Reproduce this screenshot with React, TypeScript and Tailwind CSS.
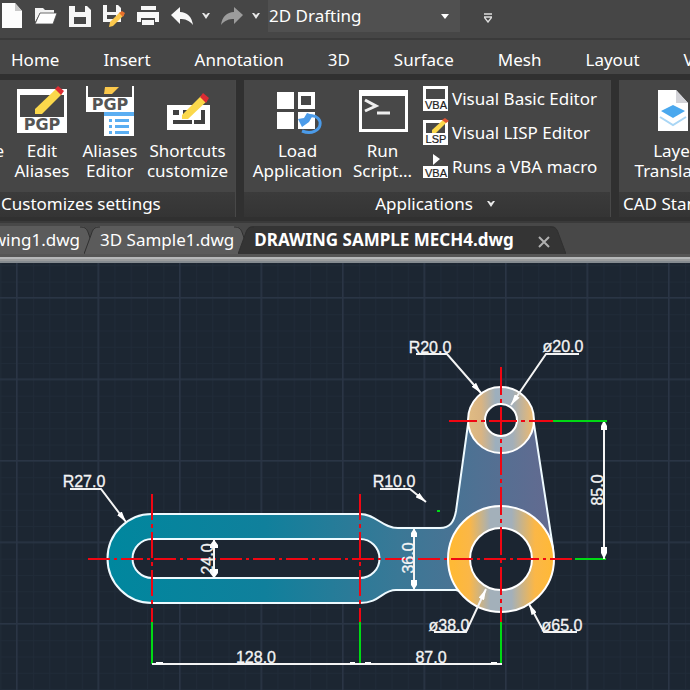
import type { ReactNode } from "react";

function NewIcon() {
  return (
    <svg className="h-7 w-6 shrink-0" viewBox="0 0 24 28" aria-hidden="true">
      <path d="M2 3h13l7 8v18H2z" fill="#fdfdfd" />
      <path d="M15 3l7 8h-7z" fill="#c9c9c9" />
    </svg>
  );
}

function OpenIcon() {
  return (
    <svg className="h-7 w-6 shrink-0" viewBox="0 0 24 28" aria-hidden="true">
      <path d="M1 8h8l2 2h9v3H6L1 22z" fill="#f2f2f2" />
      <path d="M6 13h17l-4 11H1z" fill="#fff" stroke="#4a4a4a" strokeWidth="0.8" />
    </svg>
  );
}

function SaveIcon() {
  return (
    <svg className="h-7 w-6 shrink-0" viewBox="0 0 24 28" aria-hidden="true">
      <path d="M1 6h18l4 4v17H1z" fill="#f7f7f7" />
      <path d="M7 6h10v6H7zM6 17h12v7H6z" fill="#484848" />
    </svg>
  );
}

function SaveAsIcon() {
  return (
    <svg className="h-7 w-6 shrink-0" viewBox="0 0 24 28" aria-hidden="true">
      <path d="M1 5h15l3 3v14H1z" fill="#f7f7f7" />
      <path d="M5 5h9v7H5zM5 15h9v4H5z" fill="#484848" />
      <path d="M8 22L18 12l4 3-11 11-4 1z" fill="#fbc84d" />
      <path d="M17 13l3-2 3 2-2 4z" fill="#e8712d" />
    </svg>
  );
}

function PrintIcon() {
  return (
    <svg className="h-7 w-6 shrink-0" viewBox="0 0 24 28" aria-hidden="true">
      <path d="M5 6h15v4H5zM1 12h22v10h-4v-4H5v4H1z" fill="#f7f7f7" />
      <path d="M6 20h12v5H6z" fill="#f7f7f7" />
    </svg>
  );
}

function ArrowIcon({ redo }: { redo?: boolean }) {
  return (
    <svg className="h-7 w-6 shrink-0" viewBox="0 0 24 28" aria-hidden="true">
      <path
        d={redo ? "M23 15L14 7v5C7 12 2 17 1 25c4-5 8-6 13-6v5z" : "M1 15l9-8v5c7 0 12 5 13 13-4-5-8-6-13-6v5z"}
        fill={redo ? "#9c9c9c" : "#f7f7f7"}
      />
    </svg>
  );
}

function Chevron() {
  return (
    <svg className="h-2 w-2 shrink-0" viewBox="0 0 8 8" aria-hidden="true">
      <path d="M0 1h2l2 2 2-2h2L4 7z" fill="#e8e8e8" />
    </svg>
  );
}

function EditAliasesIcon() {
  return (
    <svg className="h-12 w-13 overflow-visible" viewBox="0 0 52 48" aria-hidden="true">
      <path d="M1 1h50v44H1z" fill="#fff" />
      <path d="M4 7h44v22H4z" fill="#474747" />
      <path d="M19 26v-5L40 1l6 5-20 20z" fill="#fbd84b" />
      <path d="M39 1l3-3 6 5-3 4z" fill="#dc2c33" />
      <text x="26" y="42" textAnchor="middle" className="font-['DejaVu_Sans'] text-[16px] font-bold" fill="#555">PGP</text>
    </svg>
  );
}

function AliasesEditorIcon() {
  return (
    <svg className="h-12 w-13 overflow-visible" viewBox="0 0 52 48" aria-hidden="true">
      <path d="M2-2h2V9h44V-2h2v26H2z" fill="#fff" />
      <path d="M21-1h14l-7 7h-8z" fill="#fbc84b" />
      <text x="26" y="22" textAnchor="middle" className="font-['DejaVu_Sans'] text-[16px] font-bold" fill="#555">PGP</text>
      <path d="M20 24h30v24H20z" fill="#fff" />
      <path d="M20 24h30v4H20zM25 31h3v3h-3zM31 31h14v3H31zM25 37h3v3h-3zM31 37h14v3H31zM25 43h3v3h-3zM31 43h14v3H31z" fill="#5aaef2" />
    </svg>
  );
}

function ShortcutsIcon() {
  return (
    <svg className="h-12 w-13" viewBox="0 0 52 48" aria-hidden="true">
      <path d="M5 17h43v25H5z" fill="#fff" />
      <path d="M11 22h6v5h-6zM21 22h7v5h-7zM39 22h4v14H32v-4h7zM11 32h19v4H11z" fill="#404040" />
      <path d="M20 31v-4L39 8l6 5-19 18z" fill="#fbd84b" />
      <path d="M38 9l3-4 6 5-3 5z" fill="#dc2c33" />
    </svg>
  );
}

function LoadIcon() {
  return (
    <svg className="h-12 w-13" viewBox="0 0 52 48" aria-hidden="true">
      <path d="M5 4h17v17H5zM26 4h17v17H26zM5 24h17v17H5zM26 24h17v17H26z" fill="#fff" />
      <path d="M29 8h10v9H29z" fill="#474747" />
      <path d="M38 28c7-1 11 4 10 9s-8 10-18 6" fill="none" stroke="#4b9be9" strokeWidth="3" />
      <path d="M26 31l4 8 7-5 4-7-6-2-3 5z" fill="#4b9be9" />
    </svg>
  );
}

function ScriptIcon() {
  return (
    <svg className="h-12 w-13" viewBox="0 0 52 48" aria-hidden="true">
      <path d="M2 2h49v42H2z" fill="#fff" />
      <path d="M5 8h43v33H5z" fill="#484848" />
      <path d="M8 12l11 6-11 5M20 25h13" fill="none" stroke="#eee" strokeWidth="3" />
    </svg>
  );
}

function LayerIcon() {
  return (
    <svg className="h-12 w-13" viewBox="0 0 52 48" aria-hidden="true">
      <path d="M9 2h18l12 13v28H9z" fill="#fff" />
      <path d="M27 2l12 13H27z" fill="#d3d3d8" />
      <path d="M24 17l12 6-12 7-12-7z" fill="#4aa8ee" />
      <path d="M11 29l13 8 13-8" fill="none" stroke="#a9d6f5" strokeWidth="2" />
    </svg>
  );
}

function SmallIcon({ kind }: { kind: "basic" | "lisp" | "macro" }) {
  return (
    <svg className="h-7 w-7 shrink-0 overflow-visible" viewBox="0 0 28 28" aria-hidden="true">
      {kind === "macro" ? (
        <>
          <path d="M11 1l7 5-7 6z" fill="#fff" />
          <path d="M1 13h25v12H1z" fill="#fff" />
        </>
      ) : (
        <>
          <path d="M1 1h25v25H1z" fill="#fff" />
          <path d="M4 4h19v10H4z" fill="#484848" />
        </>
      )}
      {kind === "lisp" && (
        <>
          <path d="M10 14v-3L21 1l4 2-11 11z" fill="#fbd84b" />
          <path d="M20 1l3-2 4 3-3 2z" fill="#e05433" />
        </>
      )}
      <text x="14" y="24" textAnchor="middle" className="font-['Liberation_Sans'] text-[11px]" fill="#222" stroke="#222" strokeWidth="0.2">
        {kind === "lisp" ? "LSP" : "VBA"}
      </text>
    </svg>
  );
}

function ToolButton({ icon, top, bottom, width }: { icon: ReactNode; top: string; bottom: string; width: string }) {
  return (
    <button type="button" className={`flex shrink-0 flex-col items-center pt-2 ${width}`}>
      {icon}
      <span className="mt-[5px] whitespace-nowrap text-center leading-5">
        {top}
        <br />
        {bottom}
      </span>
    </button>
  );
}

function QuickButton({ label, children }: { label: string; children: ReactNode }) {
  return (
    <button type="button" aria-label={label} className="flex shrink-0">
      {children}
    </button>
  );
}

const menu = ["Home", "Insert", "Annotation", "3D", "Surface", "Mesh", "Layout", "View"];

function TabEdge({ right, active }: { right?: boolean; active?: boolean }) {
  return (
    <svg className="h-7 w-4 shrink-0" viewBox="0 0 16 28" aria-hidden="true">
      <path
        d={right ? "M0 0C6 0 7 3 9 9L16 28H0z" : "M16 0C10 0 9 3 7 9L0 28H16z"}
        fill={active ? "#343434" : "#5b5b5b"}
      />
      <path d={right ? "M0 1C6 1 7 3 9 9L16 28" : "M16 1C10 1 9 3 7 9L0 28"} fill="none" stroke="#303030" />
    </svg>
  );
}

function Tag({ x, y, children, vertical }: { x: number; y: number; children: string; vertical?: boolean }) {
  return (
    <text
      x={x}
      y={y}
      textAnchor="middle"
      transform={vertical ? `rotate(-90 ${x} ${y})` : undefined}
      className="font-['Liberation_Sans',sans-serif] text-[16px]"
      fill="#f4f4f4"
      stroke="#f4f4f4"
      strokeWidth="0.3"
    >
      {children}
    </text>
  );
}

function Drawing() {
  return (
    <svg className="block h-[427px] w-full" role="img" aria-label="Dimensioned linkage part">
      <defs>
        <pattern id="minor" patternUnits="userSpaceOnUse" x="0.3" y="2.3" width="16.3" height="16.3">
          <path d="M0 0.5H17M0.5 0V17" stroke="#202b38" fill="none" />
        </pattern>
        <pattern id="major" patternUnits="userSpaceOnUse" x="16" y="34" width="81.5" height="81.5">
          <path d="M0 0.5H82M0.5 0V82" stroke="#2a3545" strokeWidth="2" fill="none" />
        </pattern>
        <linearGradient id="body" gradientUnits="userSpaceOnUse" x1="108" x2="555" y1="0" y2="0">
          <stop offset="0" stopColor="#00879e" />
          <stop offset="0.35" stopColor="#10809c" />
          <stop offset="0.65" stopColor="#3a7896" />
          <stop offset="1" stopColor="#646a90" />
        </linearGradient>
        <linearGradient id="ring">
          <stop offset="0.05" stopColor="#ffb936" />
          <stop offset="0.2" stopColor="#fbb747" />
          <stop offset="0.4" stopColor="#a3b0ba" />
          <stop offset="0.6" stopColor="#a3b0ba" />
          <stop offset="0.82" stopColor="#fbb747" />
          <stop offset="1" stopColor="#ffb936" />
        </linearGradient>
        <linearGradient id="softRing">
          <stop offset="0" stopColor="#e0bb83" />
          <stop offset="0.2" stopColor="#d9b482" />
          <stop offset="0.42" stopColor="#9dafbd" />
          <stop offset="0.68" stopColor="#a3afb9" />
          <stop offset="1" stopColor="#efb96c" />
        </linearGradient>
        <marker id="arrow" viewBox="0 0 11 6" markerWidth="11" markerHeight="6" refX="11" refY="3" orient="auto" markerUnits="userSpaceOnUse">
          <path d="M0 0l11 3-11 3z" fill="#fff" />
        </marker>
      </defs>
      <rect width="100%" height="100%" fill="#1c2632" />
      <rect width="100%" height="100%" fill="url(#minor)" />
      <rect width="100%" height="100%" fill="url(#major)" />
      <g transform="translate(0 -263)">
        <path
          d="M152 514H360C376 514 382 528 398 528H440C450 528 454 522 456 511L468 424H534L553 548V559A53 53 0 0 1 463 592L456 590H396C382 590 380 603 360 603H152A44 44 0 0 1 152 514Z"
          fill="url(#body)"
          stroke="#eefaff"
          strokeWidth="2"
        />
        <path
          d="M152 539A19 19 0 0 0 152 578H360A19 19 0 0 0 360 539Z"
          fill="#1c2632"
          stroke="#eefaff"
          strokeWidth="2"
        />
        <circle cx="501" cy="420" r="33" fill="url(#softRing)" stroke="#fff" strokeWidth="2" />
        <circle cx="501" cy="420" r="16" fill="#1b2531" stroke="#fff" strokeWidth="2" />
        <circle cx="501" cy="559" r="53" fill="url(#ring)" stroke="#fff" strokeWidth="2" />
        <circle cx="501" cy="559" r="31" fill="#1b2531" stroke="#fff" strokeWidth="2" />
        <g stroke="#f00612" strokeWidth="2" fill="none">
          <path d="M88 559H575" strokeDasharray="22 4 3 4" />
          <path d="M449 421H553" strokeDasharray="28 4 4 4" />
          <path d="M501 367V622" strokeDasharray="28 4 4 4" />
          <path d="M152 494V622" strokeDasharray="26 4 4 4" />
          <path d="M360 494V622" strokeDasharray="26 4 4 4" />
        </g>
        <path d="M152 622V664M360 622V664M501 622V664M553 421H607M575 559H606M437 511h3" stroke="#00d914" strokeWidth="2" />
        <g stroke="#f4f4f4" strokeWidth="2" fill="none">
          <path d="M152 664H502M604 422V559M414 529V589M214 540V577" />
          <path d="M416 354H447L481 393" markerEnd="url(#arrow)" />
          <path d="M579 354H546L511 405" markerEnd="url(#arrow)" />
          <path d="M70 489H101L126 522" markerEnd="url(#arrow)" />
          <path d="M380 489H410L426 502" markerEnd="url(#arrow)" />
          <path d="M434 632H466L486 589" markerEnd="url(#arrow)" />
          <path d="M577 632H544L529 604" markerEnd="url(#arrow)" />
        </g>
        <path
          d="M156 662h7v2h-7zM350 662h5v2h-5zM365 662h6v2h-6zM491 662h6v2h-6zM603 422h2l2 4v4h-6v-4zM603 557h2l2-4v-6h-6v6zM413 530h2l2 3v4h-6v-4zM413 588h2l2-3v-5h-6v5zM213 541h2l3 4v3h-8v-3zM213 577h2l3-4v-4h-8v4z"
          fill="#fff"
        />
        <Tag x={430} y={353}>R20.0</Tag>
        <Tag x={563} y={352}>ø20.0</Tag>
        <Tag x={84} y={487}>R27.0</Tag>
        <Tag x={394} y={487}>R10.0</Tag>
        <Tag x={449} y={631}>ø38.0</Tag>
        <Tag x={562} y={631}>ø65.0</Tag>
        <Tag x={256} y={663}>128.0</Tag>
        <Tag x={431} y={663}>87.0</Tag>
        <Tag x={213} y={559} vertical>24.0</Tag>
        <Tag x={414} y={558} vertical>36.0</Tag>
        <Tag x={603} y={490} vertical>85.0</Tag>
      </g>
    </svg>
  );
}

export default function App() {
  return (
    <div className="flex min-h-screen flex-col overflow-hidden bg-[#1c2632] font-['Noto_Sans',sans-serif] text-[17px] text-white">
      <header className="bg-[#464646]">
        <div className="flex h-10 items-start overflow-hidden border-b-2 border-[#3a3a3a]">
          <div className="flex shrink-0 gap-x-[10px]">
            <QuickButton label="New"><NewIcon /></QuickButton>
            <QuickButton label="Open"><OpenIcon /></QuickButton>
            <QuickButton label="Save"><SaveIcon /></QuickButton>
            <QuickButton label="Save as"><SaveAsIcon /></QuickButton>
            <QuickButton label="Print"><PrintIcon /></QuickButton>
            <QuickButton label="Undo"><ArrowIcon /></QuickButton>
          </div>
          <button type="button" aria-label="Undo history" className="ml-2 flex h-8 items-center"><Chevron /></button>
          <div className="ml-[10px] flex"><QuickButton label="Redo"><ArrowIcon redo /></QuickButton></div>
          <button type="button" aria-label="Redo history" className="ml-2 flex h-8 items-center"><Chevron /></button>
          <div className="relative ml-2 h-8 w-48 shrink-0 bg-[#505050]">
            <select aria-label="Workspace" className="h-8 w-full appearance-none bg-transparent pl-px text-[17px] outline-none">
              <option>2D Drafting</option>
            </select>
            <svg className="pointer-events-none absolute right-[11px] top-[14px] h-[5px] w-2" viewBox="0 0 8 5" aria-hidden="true">
              <path d="M0 0h8L4 5z" fill="#fff" />
            </svg>
          </div>
          <button type="button" aria-label="Customize toolbar" className="ml-6 flex h-9 items-center">
            <svg className="h-[10px] w-2" viewBox="0 0 8 10" aria-hidden="true">
              <path d="M0 1h8M0 4h8L4 9z" fill="none" stroke="#ddd" strokeWidth="1.4" />
            </svg>
          </button>
        </div>
        <nav className="flex h-[34px] items-center gap-11 overflow-hidden pl-[11px] pt-[6px]">
          {menu.map((name) => (
            <button key={name} type="button" className="shrink-0">{name}</button>
          ))}
        </nav>
      </header>

      <section className="flex h-[147px] shrink-0 gap-2 overflow-hidden border-b-4 border-t-[6px] border-[#303030] bg-[#303030]" aria-label="Ribbon">
        <div className="flex w-[236px] shrink-0 flex-col border-r border-[#484848] bg-[#464646]">
          <div className="flex h-28">
            <span className="flex w-1 shrink-0 justify-end overflow-hidden pt-[61px] leading-5">e</span>
            <ToolButton icon={<EditAliasesIcon />} top="Edit" bottom="Aliases" width="w-[76px]" />
            <ToolButton icon={<AliasesEditorIcon />} top="Aliases" bottom="Editor" width="w-[60px]" />
            <ToolButton icon={<ShortcutsIcon />} top="Shortcuts" bottom="customize" width="w-[95px]" />
          </div>
          <h2 className="flex-1 bg-linear-to-b from-[#3b3b3b] to-[#343434] pl-px leading-6">Customizes settings</h2>
        </div>
        <div className="flex w-[367px] shrink-0 flex-col border-r border-[#484848] bg-[#464646]">
          <div className="flex h-28">
            <ToolButton icon={<LoadIcon />} top="Load" bottom="Application" width="w-[107px]" />
            <ToolButton icon={<ScriptIcon />} top="Run" bottom="Script..." width="w-[63px]" />
            <div className="ml-2 flex flex-col gap-[6px] pt-[5px]">
              <button type="button" className="flex h-7 items-center gap-[2px] whitespace-nowrap"><SmallIcon kind="basic" />Visual Basic Editor</button>
              <button type="button" className="flex h-7 items-center gap-[2px] whitespace-nowrap"><SmallIcon kind="lisp" />Visual LISP Editor</button>
              <button type="button" className="flex h-7 items-center gap-[2px] whitespace-nowrap"><SmallIcon kind="macro" />Runs a VBA macro</button>
            </div>
          </div>
          <h2 className="flex flex-1 items-start justify-center gap-[14px] bg-linear-to-b from-[#3b3b3b] to-[#343434] pl-4 leading-6">
            Applications
            <span className="flex h-6 items-center"><Chevron /></span>
          </h2>
        </div>
        <div className="flex min-w-0 flex-1 flex-col bg-[#464646]">
          <div className="flex h-28">
            <ToolButton icon={<LayerIcon />} top="Layer" bottom="Translator" width="w-[124px] -mr-4 pr-3" />
          </div>
          <h2 className="flex-1 whitespace-nowrap bg-linear-to-b from-[#3b3b3b] to-[#343434] pl-1 leading-6">CAD Standards</h2>
        </div>
      </section>

      <div role="tablist" className="flex h-9 shrink-0 items-end overflow-hidden border-b-[3px] border-t-2 border-b-[#555] border-t-[#3a3a3a] bg-[#484848] leading-7">
        <button type="button" role="tab" aria-selected={false} className="flex w-24 shrink-0 justify-end">
          <span className="flex min-w-0 flex-1 justify-end overflow-hidden whitespace-nowrap bg-[#5b5b5b]">Drawing1.dwg</span>
          <TabEdge right />
        </button>
        <button type="button" role="tab" aria-selected={false} className="-ml-3 flex shrink-0">
          <TabEdge />
          <span className="whitespace-nowrap bg-[#5b5b5b]">3D Sample1.dwg</span>
          <TabEdge right />
        </button>
        <div className="-ml-3 flex shrink-0">
          <TabEdge active />
          <button type="button" role="tab" aria-selected={true} className="whitespace-nowrap bg-[#343434] font-bold">
            DRAWING SAMPLE MECH4.dwg
          </button>
          <button type="button" aria-label="Close tab" className="flex items-center bg-[#343434] pl-6 pt-1">
            <svg className="h-3 w-3" viewBox="0 0 12 12" aria-hidden="true">
              <path d="M1 1l10 10M11 1L1 11" stroke="#b0b0b0" strokeWidth="2" />
            </svg>
          </button>
          <TabEdge right active />
        </div>
      </div>
      <div className="h-[6px] shrink-0 border-b-2 border-t-2 border-b-[#858b90] border-t-[#b5b7b8] bg-[#9a9c9d]" />
      <main className="flex-1"><Drawing /></main>
    </div>
  );
}
